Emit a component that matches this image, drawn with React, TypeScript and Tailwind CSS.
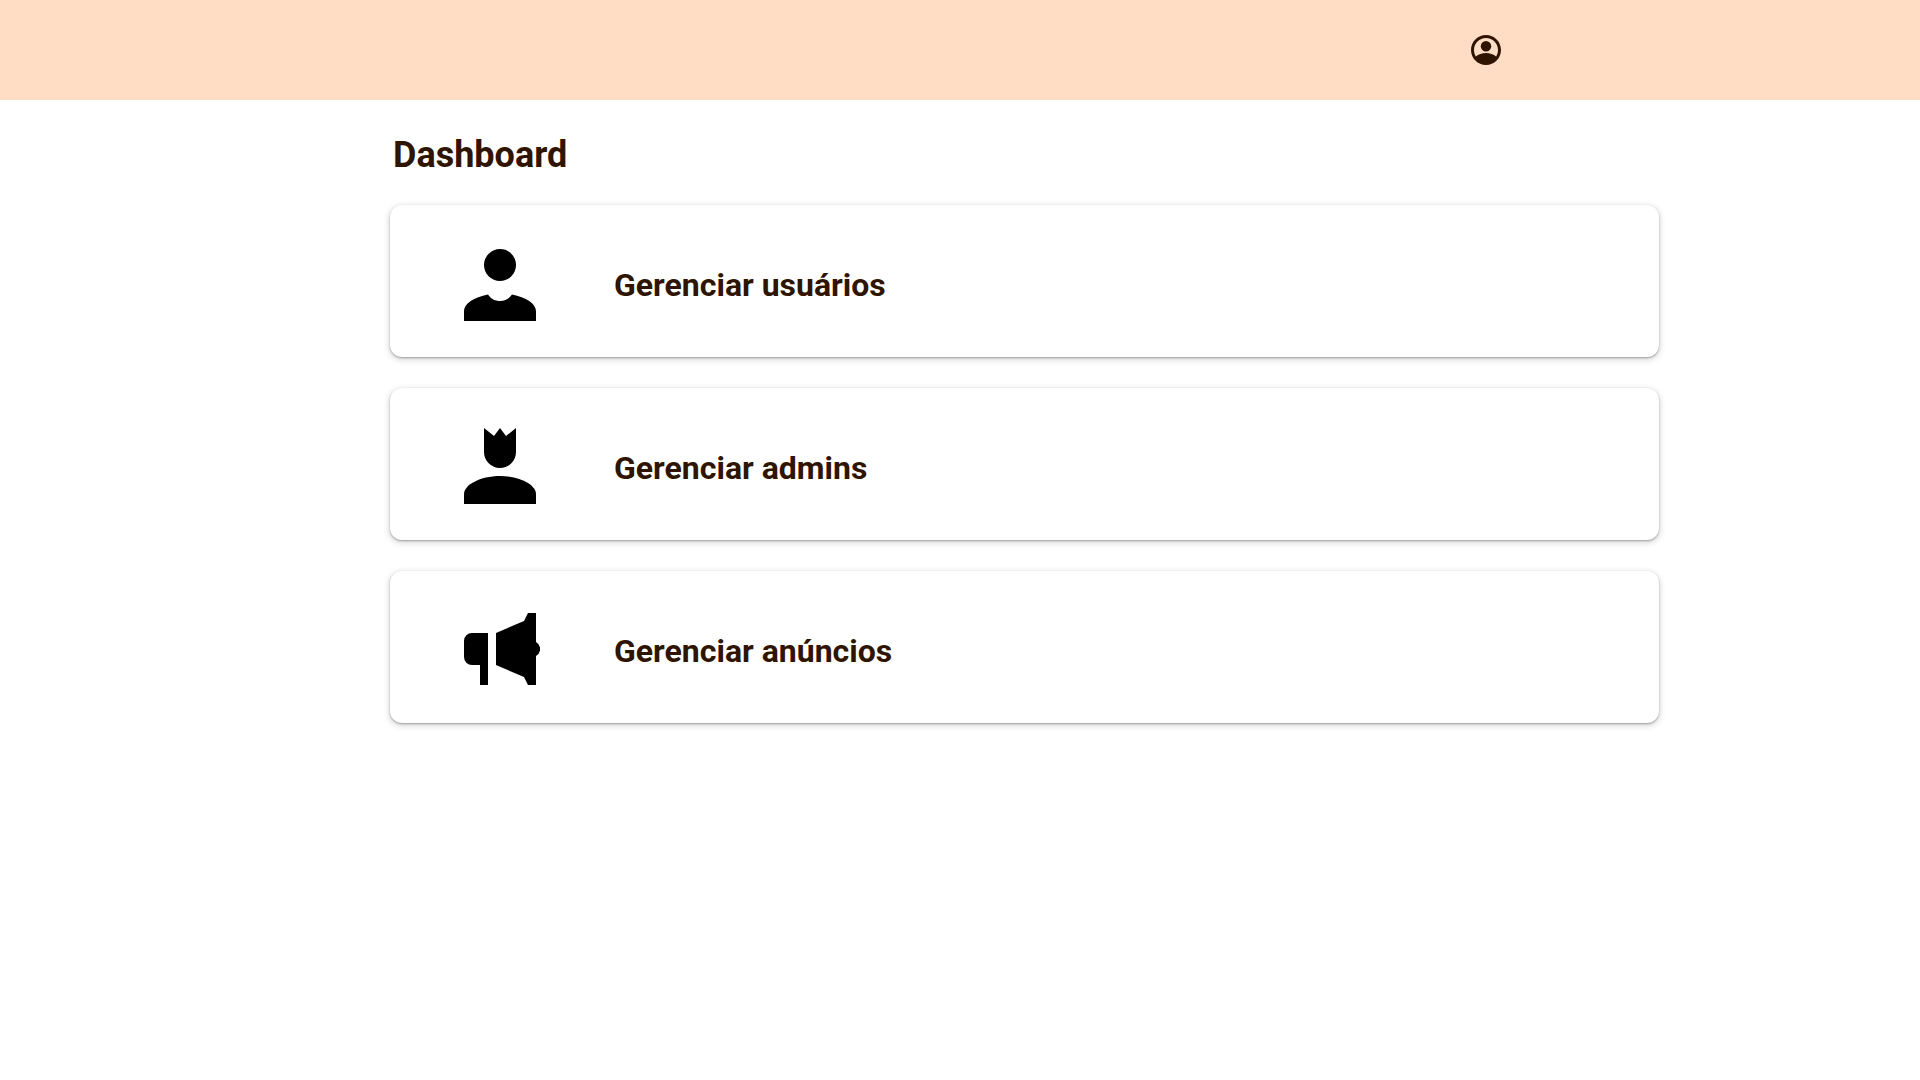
import type { ReactNode } from "react";

function UserIcon() {
  return (
    <svg viewBox="0 0 80 80" className="size-20 shrink-0" fill="currentColor" aria-hidden="true">
      <circle cx="40" cy="22" r="16" />
      <path d="M4 78V68C4 61 14 54 28 51.5C31 56 35 58 40 58S49 56 52 51.5C66 54 76 61 76 68V78Z" />
    </svg>
  );
}

function AdminIcon() {
  return (
    <svg viewBox="0 0 80 80" className="size-20 shrink-0" fill="currentColor" aria-hidden="true">
      <path d="M24 2L34 10L40 2L46 10L56 2V26A16 16 0 0 1 24 26Z" />
      <path d="M4 78V68C4 59 20 50 40 50S76 59 76 68V78Z" />
    </svg>
  );
}

function MegaphoneIcon() {
  return (
    <svg viewBox="0 0 80 80" className="size-20 shrink-0" fill="currentColor" aria-hidden="true">
      <path d="M28 24V76H20V56H12A8 8 0 0 1 4 48V32A8 8 0 0 1 12 24Z" />
      <path d="M36 24L64 12L68 4H76V33A8 8 0 0 1 76 47V76H68L64 68L36 56Z" />
    </svg>
  );
}

const items: { label: string; icon: ReactNode }[] = [
  { label: "Gerenciar usuários", icon: <UserIcon /> },
  { label: "Gerenciar admins", icon: <AdminIcon /> },
  { label: "Gerenciar anúncios", icon: <MegaphoneIcon /> },
];

export default function App() {
  return (
    <div className="min-h-screen bg-white font-[Roboto,sans-serif] text-[#2f1500]">
      <header className="flex h-25 items-center justify-end bg-[#ffdcc4] pr-104">
        <button type="button" aria-label="Conta">
          <svg viewBox="0 0 24 24" className="size-9" fill="currentColor" aria-hidden="true">
            <path d="M12 2C6.48 2 2 6.48 2 12s4.48 10 10 10 10-4.48 10-10S17.52 2 12 2zM12 4c4.42 0 8 3.58 8 8 0 1.57-.46 3.03-1.24 4.26C17.06 14.87 14.64 14 12 14s-5.06.87-6.76 2.26C4.46 15.03 4 13.57 4 12c0-4.42 3.58-8 8-8z" />
            <circle cx="12" cy="9.5" r="3.5" />
          </svg>
        </button>
      </header>
      <main className="pt-[31px] pr-[261px] pl-[390px]">
        <h1 className="mb-[26px] px-[3px] text-4xl leading-[48px] font-bold">Dashboard</h1>
        <nav className="flex flex-col gap-[31px]">
          {items.map((item) => (
            <a
              key={item.label}
              href="#"
              className="flex h-[152px] items-center gap-[74px] rounded-xl bg-white px-[70px] pt-1 shadow-[0_1px_2px_0_rgba(0,0,0,0.3),0_2px_6px_1px_rgba(0,0,0,0.15)]"
            >
              <span className="text-black">{item.icon}</span>
              <h2 className="pt-1 text-[32px] leading-10 font-bold">{item.label}</h2>
            </a>
          ))}
        </nav>
      </main>
    </div>
  );
}
